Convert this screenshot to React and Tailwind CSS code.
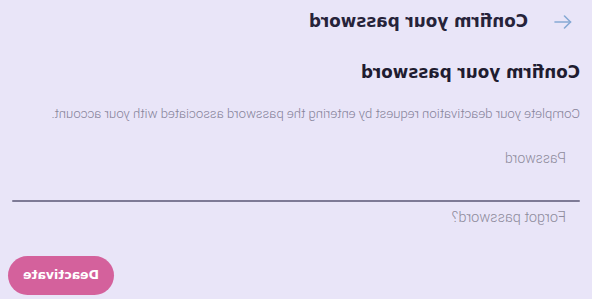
import React from "react";

const ArrowLeft = () => (
  <svg width="18" height="14" viewBox="0 0 18 14" fill="none" stroke="#86a9d4" strokeWidth="1.6" strokeLinecap="round" strokeLinejoin="round">
    <path d="M17 7H1.5" />
    <path d="M7.5 1L1.5 7l6 6" />
  </svg>
);

const heavy = { fontFamily: "'DejaVu Sans', 'Liberation Sans', sans-serif" };

export default function App() {
  return (
    <div className="w-[592px] h-[299px] bg-[#e9e5f8] overflow-hidden -scale-x-100" style={{ fontFamily: "Roboto, 'Liberation Sans', sans-serif" }}>
      <div className="flex items-center h-[44px] pl-[20px]">
        <ArrowLeft />
        <h1 className="ml-[26px] text-[16.8px] font-bold text-[#26233a]" style={heavy}>
          Confirm your password
        </h1>
      </div>
      <div className="px-[12px]">
        <h2 className="mt-[16px] text-[16.8px] font-bold text-[#1f1c30]" style={heavy}>
          Confirm your password
        </h2>
        <p className="mt-[22px] text-[13.2px] font-light text-[#86839a] leading-none">
          Complete your deactivation request by entering the password associated with your account.
        </p>
        <div className="mt-[31px] pl-[14px] text-[14px] font-light text-[#8e8b9c] leading-none">Password</div>
        <div className="mt-[35px] h-[2px] bg-[#7e7a96] rounded-full" />
        <div className="mt-[9px] pl-[14px] text-[14.5px] font-light text-[#8e8b9c] leading-none">Forgot password?</div>
        <div className="flex justify-end mt-[30px]">
          <button className="mr-[-4px] w-[106px] h-[39px] rounded-full bg-[#d4619c] text-white text-[12.5px] font-bold" style={heavy}>
            Deactivate
          </button>
        </div>
      </div>
    </div>
  );
}
